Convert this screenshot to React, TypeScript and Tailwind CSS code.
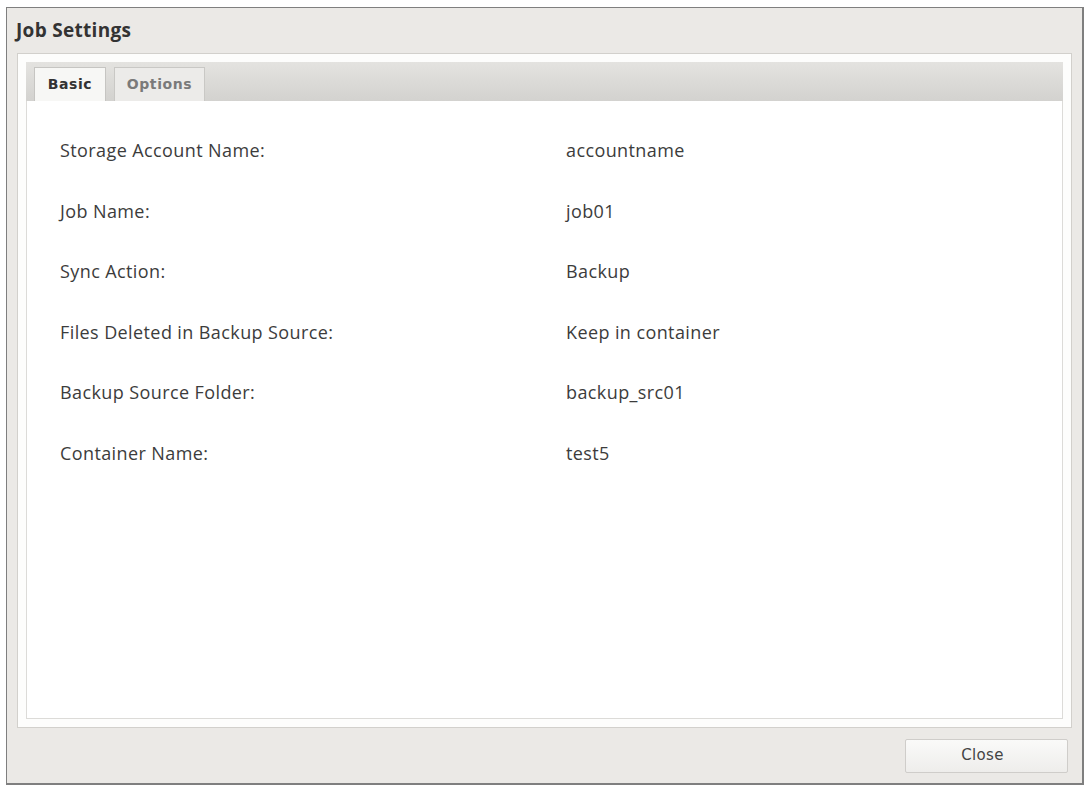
import React from "react"

const rows: [string, string][] = [
    ["Storage Account Name:", "accountname"],
    ["Job Name:", "job01"],
    ["Sync Action:", "Backup"],
    ["Files Deleted in Backup Source:", "Keep in container"],
    ["Backup Source Folder:", "backup_src01"],
    ["Container Name:", "test5"],
]

export default function App() {
    return (
        <div className="h-[792px] w-[1090px] bg-white pl-[6px] pt-[7px]">
            {/* Dialog */}
            <div className="flex h-[778px] w-[1078px] flex-col border border-[#7f7f7f] border-r-2 border-b-2 bg-[#ebe9e6]">
                {/* Title */}
                <div className="flex h-[45px] items-center pl-[9px] font-['Open_Sans',sans-serif] text-[19px] font-bold tracking-[0.3px] text-[#333]">
                    Job Settings
                </div>

                {/* Panel */}
                <div className="mx-[10px] flex h-[675px] flex-col border border-[#d2d0cc] bg-[#fdfdfc] p-[8px]">
                    {/* Tab strip */}
                    <div className="flex h-[39px] items-end gap-[8px] bg-gradient-to-b from-[#e4e3e0] to-[#d3d2cf] pl-[8px] font-['DejaVu_Sans',sans-serif] text-[14px] font-bold tracking-[0.6px]">
                        <div className="flex h-[34px] w-[72px] items-center justify-center border border-b-0 border-[#c6c5c2] bg-[#f7f7f5] text-[#333]">
                            Basic
                        </div>
                        <div className="flex h-[34px] w-[91px] items-center justify-center border border-b-0 border-[#c9c8c5] bg-[#ecebe9] text-[#7a7a7a]">
                            Options
                        </div>
                    </div>

                    {/* Content */}
                    <div className="flex-1 border border-t-0 border-[#dcdbd8] bg-white pl-[33px] pt-[35px] font-['Open_Sans',sans-serif] text-[18px] tracking-[0.4px] text-[#3c3c3c]">
                        {rows.map(([label, value]) => (
                            <div key={label} className="flex h-[60.5px] items-start">
                                <div className="w-[506px] leading-[28px]">{label}</div>
                                <div className="leading-[28px]">{value}</div>
                            </div>
                        ))}
                    </div>
                </div>

                {/* Footer */}
                <div className="flex flex-1 items-center justify-end pr-[14px]">
                    <button className="h-[34px] w-[163px] rounded-[2px] border border-[#cfcdca] bg-gradient-to-b from-[#fafaf9] to-[#eeedeb] pr-[8px] font-['DejaVu_Sans',sans-serif] text-[15px] tracking-[0.3px] text-[#444]">
                        Close
                    </button>
                </div>
            </div>
        </div>
    )
}
